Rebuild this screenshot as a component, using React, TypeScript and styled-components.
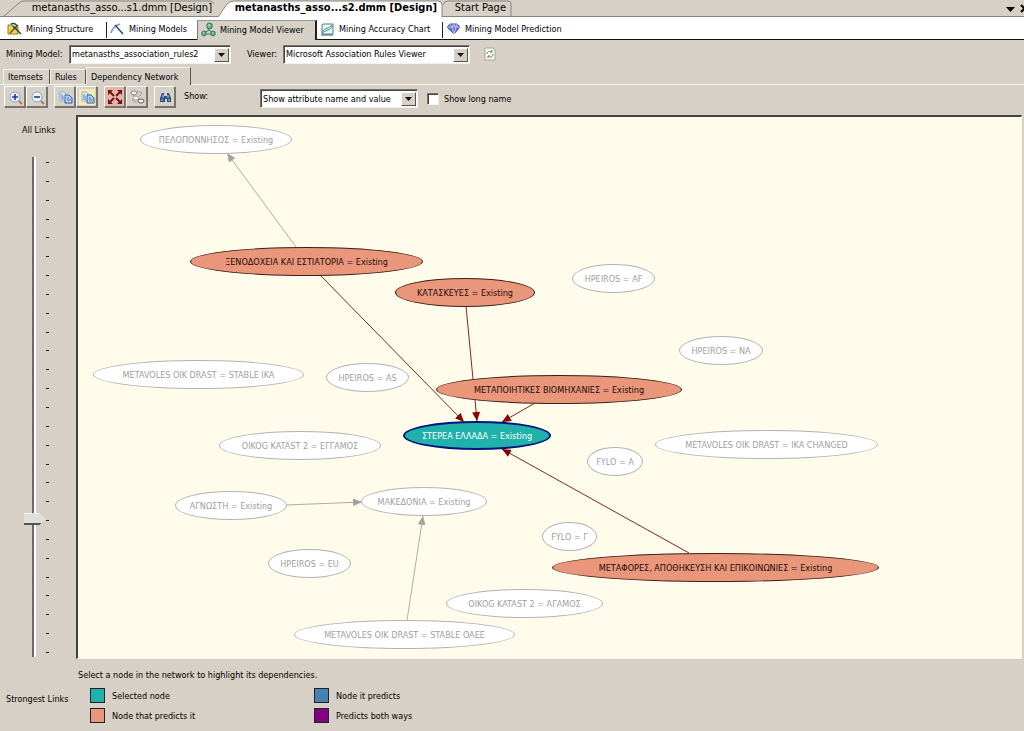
import React, { useState } from "react";
import styled, { createGlobalStyle, css } from "styled-components";

const FACE = "#d6d0c6";

const GlobalStyle = createGlobalStyle`
  * { box-sizing: border-box; }
  html, body, #root { height: 100%; }
  body {
    margin: 0;
    background: ${FACE};
    color: #000;
    font: 9px/14px "DejaVu Sans Condensed", "DejaVu Sans", sans-serif;
  }
  button, input, select { font: inherit; color: inherit; margin: 0; }
`;

const Shell = styled.div`
  height: 100%;
  min-height: 600px;
  display: flex;
  flex-direction: column;
  overflow: hidden;
`;

/* Document tabs */
const DocumentTabs = styled.nav`
  display: flex;
  flex: none;
  align-items: flex-end;
  height: 17px;
  border-bottom: 1px solid #87857f;
  padding-left: 4px;
`;

const DocumentTab = styled.button<{ $active?: boolean; $width: number }>`
  position: relative;
  flex: none;
  width: ${(p) => p.$width}px;
  height: 16px;
  padding: 0 6px 0 0;
  border: 0;
  background: none;
  font-size: 11px;
  line-height: 16px;
  font-weight: ${(p) => (p.$active ? "bold" : "normal")};
  text-align: right;
  white-space: nowrap;
  z-index: ${(p) => (p.$active ? 1 : 0)};
`;

const TabShape = styled.svg`
  position: absolute;
  left: 0;
  top: 0;
  z-index: -1;
`;

const DocumentActions = styled.div`
  margin-left: auto;
  display: flex;
  height: 16px;
  overflow: hidden;
`;

const FlatButton = styled.button<{ $gap?: number }>`
  display: grid;
  place-items: center;
  flex: none;
  border: 0;
  padding: 0;
  background: none;
  && { margin-left: ${(p) => p.$gap || 0}px; }
`;

/* Designer view tabs */
const ViewTabs = styled.nav`
  display: flex;
  flex: none;
  height: 23px;
  padding-left: 4px;
  background: #fff;
  border-bottom: 1px solid #111;
`;

const ViewTab = styled.button<{ $active?: boolean; $width: number; $rule?: boolean }>`
  display: flex;
  align-items: center;
  gap: 4px;
  flex: none;
  width: ${(p) => p.$width}px;
  height: 22px;
  padding: 2px 0 0 2px;
  border: 0;
  background: none;
  white-space: nowrap;
  position: relative;
  ${(p) =>
    p.$rule &&
    css`
      &::after {
        content: "";
        position: absolute;
        right: 0;
        top: 5px;
        bottom: 1px;
        width: 1px;
        background: #222;
      }
    `}
  ${(p) =>
    p.$active &&
    css`
      height: 20px;
      margin-top: 3px;
      padding: 0 0 2px 2px;
      height: 20px;
      background: ${FACE};
      border: solid;
      border-width: 1px 2px 0 1px;
      border-color: #999 #222 #999 #777;
      && { margin-top: 3px; }
    `}
`;

/* Rows of controls */
const ModelRow = styled.div`
  display: flex;
  flex: none;
  align-items: center;
  height: 28px;
  padding: 0 6px;
`;

const Caption = styled.label<{ $width?: number; $indent?: number }>`
  flex: none;
  width: ${(p) => (p.$width ? `${p.$width}px` : "auto")};
  padding-left: ${(p) => p.$indent || 0}px;
  white-space: nowrap;
`;

const Combo = styled.span<{ $width: number }>`
  position: relative;
  flex: none;
  display: flex;
  width: ${(p) => p.$width}px;
  height: 19px;
  background: #fff;
  border: 1px solid;
  border-color: #77746e #f4f2ee #f4f2ee #77746e;
  box-shadow: inset 1px 1px 0 #45433f;
`;

const ComboSelect = styled.select`
  appearance: none;
  width: 100%;
  padding: 0 18px 0 2px;
  border: 0;
  outline: 0;
  background: none;
`;

const ComboArrow = styled.span`
  position: absolute;
  right: 1px;
  top: 2px;
  bottom: 1px;
  width: 15px;
  display: grid;
  place-items: center;
  background: ${FACE};
  border: 1px solid;
  border-color: #fff #55534e #55534e #fff;
  pointer-events: none;
`;

const PaneTabs = styled.nav`
  display: flex;
  flex: none;
  align-items: flex-end;
  height: 17px;
  padding-left: 3px;
  box-shadow: inset 0 -1px 0 #f3f0ea;
`;

const PaneTab = styled.button<{ $active?: boolean; $width: number }>`
  flex: none;
  width: ${(p) => p.$width}px;
  height: ${(p) => (p.$active ? 18 : 15)}px;
  padding: 0 0 0 4px;
  text-align: left;
  white-space: nowrap;
  background: ${FACE};
  border: solid;
  border-width: 1px 1px 0 1px;
  border-color: #f3f0ea #55534e #f3f0ea #f3f0ea;
  && { margin-bottom: ${(p) => (p.$active ? 0 : 1)}px; }
`;

const Toolbar = styled.div`
  display: flex;
  flex: none;
  align-items: flex-start;
  height: 30px;
  padding: 1px 4px 0;
`;

const ToolGroup = styled.div<{ $gap: number }>`
  display: flex;
  flex: none;
  gap: 1px;
  margin-right: ${(p) => p.$gap}px;
`;

const ToolButton = styled.button<{ $tint?: string }>`
  display: grid;
  place-items: center;
  width: 21px;
  height: 21px;
  padding: 0;
  background: ${(p) => p.$tint || FACE};
  border: 1px solid;
  border-color: #fff #77746e #77746e #fff;
  box-shadow: 1px 1px 0 #77746e;
`;

const ShowLabel = styled.label`
  width: 76px;
  padding-top: 3px;
`;

const ShowControls = styled.div`
  display: flex;
  align-items: center;
  padding-top: 3px;
`;

const CheckBox = styled.input`
  appearance: none;
  flex: none;
  width: 12px;
  height: 12px;
  background: #fff;
  border: 1px solid;
  border-color: #77746e #f4f2ee #f4f2ee #77746e;
  box-shadow: inset 1px 1px 0 #45433f;
  && { margin: 0 5px 0 9px; }
  &:checked { background: #333; }
`;

/* Main area */
const Work = styled.main`
  flex: 1;
  min-height: 0;
  display: grid;
  grid-template-columns: 76px minmax(0, 1fr);
  grid-template-rows: minmax(0, 1fr);
`;

const LinkPanel = styled.section`
  display: flex;
  flex-direction: column;
  min-height: 0;
  padding: 8px 0 25px;
`;

const EndLabel = styled.span<{ $left: number }>`
  padding-left: ${(p) => p.$left}px;
  white-space: nowrap;
`;

const SliderArea = styled.div`
  flex: 1;
  min-height: 0;
  display: flex;
  padding: 20px 0 35px 24px;
`;

const Slider = styled.input`
  appearance: none;
  writing-mode: vertical-lr;
  width: 22px;
  height: auto;
  min-height: 0;
  background: linear-gradient(90deg, transparent 8px, #6c6a66 8px, #6c6a66 10px, #fff 10px, #fff 12px, transparent 12px);
  outline: 0;
  &::-webkit-slider-thumb {
    appearance: none;
    width: 22px;
    height: 12px;
    border: 0;
    background: linear-gradient(#fff 1px, #e2dfd8 1px, #e2dfd8 10px, #55534e 10px);
    clip-path: polygon(0 0, 15px 0, 22px 6px, 15px 12px, 0 12px);
  }
`;

const Ticks = styled.div`
  display: flex;
  flex-direction: column;
  justify-content: space-between;
  padding: 5px 0 4px;
`;

const Tick = styled.i`
  width: 3px;
  height: 1px;
  background: #222;
`;

const NetworkPanel = styled.section`
  display: flex;
  flex-direction: column;
  min-height: 0;
`;

const Canvas = styled.div`
  position: relative;
  flex: 1;
  min-height: 0;
  margin-right: 2px;
  background: #fffceb;
  border: solid;
  border-width: 2px 1px 1px 2px;
  border-color: #45433f #f8f6f0 #f8f6f0 #45433f;
  overflow: hidden;
`;

const Edges = styled.svg`
  position: absolute;
  left: 0;
  top: 0;
`;

type Kind = "idle" | "source" | "selected";

const nodeLook = {
  idle: css`background: #fff; color: #a0a0a0; border: 1px solid #b4b2b4;`,
  source: css`background: #e9967a; color: #1c0d0a; border: 1px solid #3c211a;`,
  selected: css`background: #20b2aa; color: #fff; border: 2px solid #00157c;`,
};

const Node = styled.button<{ $kind: Kind; $x: number; $y: number; $w: number }>`
  position: absolute;
  left: ${(p) => p.$x - 78}px;
  top: ${(p) => p.$y - 14 - 117}px;
  width: ${(p) => p.$w}px;
  height: 29px;
  padding: 0;
  border-radius: 50%;
  white-space: nowrap;
  display: flex;
  align-items: center;
  justify-content: center;
  ${(p) => nodeLook[p.$kind]}
`;

const Footer = styled.footer`
  flex: none;
  height: 72px;
  padding: 9px 0 0 2px;
`;

const Legend = styled.ul`
  list-style: none;
  margin: 6px 0 0 12px;
  padding: 0;
  display: grid;
  grid-template-columns: 224px 224px;
  row-gap: 5px;
`;

const LegendItem = styled.li`
  display: flex;
  align-items: center;
  gap: 7px;
  height: 15px;
`;

const Swatch = styled.i<{ $color: string }>`
  width: 15px;
  height: 15px;
  background: ${(p) => p.$color};
  border: 1px solid #222;
`;

/* Icons */
const IconSvg = styled.svg`
  flex: none;
  display: block;
`;

const Ico = ({ children, size = 16 }: { children: React.ReactNode; size?: number }) => (
  <IconSvg width={size} height={size} viewBox="0 0 16 16" fill="none" aria-hidden="true">{children}</IconSvg>
);

const StructureIcon = () => (
  <Ico>
    <path d="M2 4h4l1 2h5v7H2z" fill="#efd348" stroke="#967b19" />
    <path d="m4 12 8-8" stroke="#5b5632" strokeWidth="1.6" />
    <path d="m7 5 8 8M5 3c3-1 5 0 6 2" stroke="#28394c" strokeWidth="1.4" />
  </Ico>
);
const ModelsIcon = () => (
  <Ico>
    <path d="M2 12C3 8 5 5 11 3" stroke="#7f9cc4" strokeWidth="1.6" />
    <path d="m6 4 8 9" stroke="#33486b" strokeWidth="1.5" />
  </Ico>
);
const ViewerIcon = () => (
  <Ico>
    <path d="M9 6v3M9 8l-5 3M9 8l5 4M4 12h9" stroke="#397b75" />
    <path d="m9 1 3 1v4l-3 1-2-1V2zM4 9l2 1v3l-2 1-2-1v-3zM13 9l2 1v3l-2 1-2-1v-3z" fill="#64b984" stroke="#2c765d" />
    <path d="M8 3h2M3 11h1M12 11h1" stroke="#c9f1d3" />
  </Ico>
);
const ChartIcon = () => (
  <Ico>
    <path d="M4 3h10v10H3V4z" fill="#edf8f8" stroke="#527a85" />
    <path d="M3 12C5 6 8 9 13 4 13 9 9 8 3 12z" fill="#d8eff0" stroke="#458b98" />
    <path d="M2 14h12" stroke="#345765" />
  </Ico>
);
const GemIcon = () => (
  <Ico>
    <path d="M5 3h7l3 3-6 7-7-7z" fill="#6974cc" stroke="#4850a2" />
    <path d="m5 3 2 3 2 7 2-7 1-3M2 6h13M7 6l2-3 2 3" stroke="#b8c0f2" />
  </Ico>
);
const RefreshIcon = () => (
  <Ico>
    <path d="M3 2h8l2 2v10H3z" fill="#f8f9ee" stroke="#a3a9a8" />
    <path d="M5 8c0-3 3-3 5-2V4m0 2H8M11 8c0 3-3 4-5 2v2m0-2h2" stroke="#688a68" />
  </Ico>
);
const ZoomIcon = ({ plus }: { plus?: boolean }) => (
  <Ico>
    <circle cx="8" cy="8" r="5" fill="#e9f4fd" stroke="#8ba4c6" />
    <path d={plus ? "M5 8h6M8 5v6" : "M5 8h6"} stroke="#243c83" strokeWidth="1.6" />
    <path d="m12 12 3 3" stroke="#b47951" strokeWidth="2" />
  </Ico>
);
const CopyIcon = ({ all }: { all?: boolean }) => (
  <Ico>
    {all && <path d="M0 0h16v16H0z" fill="#f5ecad" />}
    <path d="M3 3h4l2 2v7H3z" fill="#e8f2ff" stroke="#86a9d6" />
    <path d="M8 6h4l3 3v5H8z" fill="#b4d0fa" stroke="#315f9d" />
    <path d="M4 6h2M4 8h3M4 10h3M10 9h2M10 11h4" stroke="#4779b7" />
  </Ico>
);
const FitIcon = () => (
  <Ico>
    <path d="m3 3 4 4M13 3 9 7M3 13l4-4M13 13 9 9" stroke="#711411" strokeWidth="2" />
    <path d="M1 1h5L1 6zM15 1v5l-5-5zM1 15v-5l5 5zM15 15h-5l5-5z" fill="#711411" />
  </Ico>
);
const LayoutIcon = () => (
  <Ico>
    <path d="m4 6 4 5M8 2l5 2-2 3M3 11l5 3" stroke="#777" strokeDasharray="1 1" />
    <ellipse cx="5" cy="4" rx="3" ry="2" fill="#eee" stroke="#888" />
    <ellipse cx="7" cy="9" rx="3" ry="2" fill="#fff" stroke="#999" />
    <ellipse cx="12" cy="12" rx="3" ry="2" fill="#fff" stroke="#555" />
  </Ico>
);
const FindIcon = () => (
  <Ico>
    <path d="M5 4h2v3h3V4h2l2 5v4h-4v-3H8v3H3V9z" fill="#304e82" />
    <path d="M6 6v3M11 6v3M5 10v2M12 10v2" stroke="#b6d3f5" />
  </Ico>
);
const Down = () => (
  <svg width="7" height="4" aria-hidden="true"><path d="M0 0h7L3.5 4z" fill="#111" /></svg>
);

const nodes: { label: string; x: number; y: number; w: number; kind?: Kind }[] = [
  { label: "ΠΕΛΟΠΟΝΝΗΣΟΣ = Existing", x: 140, y: 139, w: 152 },
  { label: "ΞΕΝΟΔΟΧΕΙΑ ΚΑΙ ΕΣΤΙΑΤΟΡΙΑ = Existing", x: 190, y: 261, w: 233, kind: "source" },
  { label: "ΚΑΤΑΣΚΕΥΕΣ = Existing", x: 395, y: 292, w: 140, kind: "source" },
  { label: "HPEIROS = AF", x: 572, y: 278, w: 83 },
  { label: "HPEIROS = NA", x: 679, y: 350, w: 84 },
  { label: "METAVOLES OIK DRAST = STABLE IKA", x: 93, y: 374, w: 211 },
  { label: "HPEIROS = AS", x: 326, y: 377, w: 83 },
  { label: "ΜΕΤΑΠΟΙΗΤΙΚΕΣ ΒΙΟΜΗΧΑΝΙΕΣ = Existing", x: 436, y: 389, w: 246, kind: "source" },
  { label: "OIKOG KATAST 2 = ΕΓΓΑΜΟΣ", x: 219, y: 445, w: 162 },
  { label: "ΣΤΕΡΕΑ ΕΛΛΑΔΑ = Existing", x: 403, y: 435, w: 148, kind: "selected" },
  { label: "METAVOLES OIK DRAST = IKA CHANGED", x: 655, y: 444, w: 223 },
  { label: "FYLO = A", x: 587, y: 461, w: 56 },
  { label: "ΑΓΝΩΣΤΗ = Existing", x: 175, y: 505, w: 112 },
  { label: "ΜΑΚΕΔΟΝΙΑ = Existing", x: 361, y: 501, w: 126 },
  { label: "HPEIROS = EU", x: 268, y: 563, w: 83 },
  { label: "FYLO = Γ", x: 542, y: 536, w: 55 },
  { label: "ΜΕΤΑΦΟΡΕΣ, ΑΠΟΘΗΚΕΥΣΗ ΚΑΙ ΕΠΙΚΟΙΝΩΝΙΕΣ = Existing", x: 552, y: 567, w: 327, kind: "source" },
  { label: "OIKOG KATAST 2 = ΑΓΑΜΟΣ", x: 446, y: 603, w: 157 },
  { label: "METAVOLES OIK DRAST = STABLE OAEE", x: 294, y: 634, w: 221 },
];

const edges: { from: [number, number]; to: [number, number]; active?: boolean }[] = [
  { from: [296, 247], to: [227, 153] },
  { from: [286, 505], to: [362, 502] },
  { from: [407, 620], to: [423, 516] },
  { from: [320, 275], to: [464, 422], active: true },
  { from: [466, 306], to: [477, 421], active: true },
  { from: [535, 403], to: [502, 422], active: true },
  { from: [689, 553], to: [502, 449], active: true },
];

const Network = () => (
  <Canvas>
    <Edges width="944" height="542" viewBox="78 117 944 542" aria-hidden="true">
      <defs>
        {[["rest", "#a5a3a0"], ["lit", "#8b0000"]].map(([id, fill]) => (
          <marker key={id} id={id} markerUnits="userSpaceOnUse" markerWidth="10" markerHeight="10" refX="9" refY="4" orient="auto">
            <path d="M0 0 9 4 0 8z" fill={fill} />
          </marker>
        ))}
      </defs>
      {edges.map((e, i) => (
        <line
          key={i}
          x1={e.from[0]} y1={e.from[1]} x2={e.to[0]} y2={e.to[1]}
          stroke={e.active ? "#81291f" : "#b0ada4"}
          markerEnd={e.active ? "url(#lit)" : "url(#rest)"}
        />
      ))}
    </Edges>
    {nodes.map((n) => (
      <Node key={n.label} $kind={n.kind || "idle"} $x={n.x} $y={n.y} $w={n.w}>{n.label}</Node>
    ))}
  </Canvas>
);

const ComboBox = ({ id, width, value }: { id: string; width: number; value: string }) => (
  <Combo $width={width}>
    <ComboSelect id={id}><option>{value}</option></ComboSelect>
    <ComboArrow><Down /></ComboArrow>
  </Combo>
);

export default function App() {
  const [strength, setStrength] = useState(73);
  const [longName, setLongName] = useState(false);
  return (
    <>
      <GlobalStyle />
      <Shell>
        <DocumentTabs>
          <DocumentTab $width={214}>
            <TabShape width="214" height="17"><path d="M0 16 15 3Q17 1 20 1H205Q209 1 210 4" fill="none" stroke="#87857f" /></TabShape>
            metanasths_asso...s1.dmm [Design]
          </DocumentTab>
          <DocumentTab $active $width={225}>
            <TabShape width="225" height="17"><path d="M0 17 9 4Q12 1 16 1H220Q224 1 224 5V17" fill="#fff" stroke="#87857f" /></TabShape>
            metanasths_asso...s2.dmm [Design]
          </DocumentTab>
          <DocumentTab $width={69}>
            <TabShape width="69" height="17"><path d="M0 5Q1 1 5 1H65Q68 1 68 4V16" fill="none" stroke="#87857f" /></TabShape>
            Start Page
          </DocumentTab>
          <DocumentActions>
            <FlatButton aria-label="Window list"><svg width="17" height="16"><path d="M3 7h9L7.5 12z" fill="#000" /></svg></FlatButton>
            <FlatButton aria-label="Close"><svg width="4" height="16"><path d="m1 5 7 7M1 12l7-7" stroke="#000" strokeWidth="2" /></svg></FlatButton>
          </DocumentActions>
        </DocumentTabs>
        <ViewTabs>
          <ViewTab $width={103} $rule><StructureIcon />Mining Structure</ViewTab>
          <ViewTab $width={90}><ModelsIcon />Mining Models</ViewTab>
          <ViewTab $width={120} $active><ViewerIcon />Mining Model Viewer</ViewTab>
          <ViewTab $width={126} $rule><ChartIcon />Mining Accuracy Chart</ViewTab>
          <ViewTab $width={126}><GemIcon />Mining Model Prediction</ViewTab>
        </ViewTabs>
        <ModelRow>
          <Caption htmlFor="model" $width={63}>Mining Model:</Caption>
          <ComboBox id="model" width={162} value="metanasths_association_rules2" />
          <Caption htmlFor="viewer" $width={52} $indent={16}>Viewer:</Caption>
          <ComboBox id="viewer" width={187} value="Microsoft Association Rules Viewer" />
          <FlatButton aria-label="Refresh" $gap={12}><RefreshIcon /></FlatButton>
        </ModelRow>
        <PaneTabs>
          <PaneTab $width={47}>Itemsets</PaneTab>
          <PaneTab $width={36}>Rules</PaneTab>
          <PaneTab $active $width={105}>Dependency Network</PaneTab>
        </PaneTabs>
        <Toolbar>
          <ToolGroup $gap={7}>
            <ToolButton aria-label="Zoom in"><ZoomIcon plus /></ToolButton>
            <ToolButton aria-label="Zoom out"><ZoomIcon /></ToolButton>
          </ToolGroup>
          <ToolGroup $gap={7}>
            <ToolButton aria-label="Copy view"><CopyIcon /></ToolButton>
            <ToolButton aria-label="Copy entire graph"><CopyIcon all /></ToolButton>
          </ToolGroup>
          <ToolGroup $gap={7}>
            <ToolButton aria-label="Fit to window" $tint="#e5b5ad"><FitIcon /></ToolButton>
            <ToolButton aria-label="Improve layout"><LayoutIcon /></ToolButton>
          </ToolGroup>
          <ToolGroup $gap={9}>
            <ToolButton aria-label="Find node"><FindIcon /></ToolButton>
          </ToolGroup>
          <ShowLabel htmlFor="show">Show:</ShowLabel>
          <ShowControls>
            <ComboBox id="show" width={158} value="Show attribute name and value" />
            <CheckBox type="checkbox" id="long" checked={longName} onChange={(e) => setLongName(e.target.checked)} />
            <Caption htmlFor="long">Show long name</Caption>
          </ShowControls>
        </Toolbar>
        <Work>
          <LinkPanel>
            <EndLabel $left={22}>All Links</EndLabel>
            <SliderArea>
              <Slider type="range" min={0} max={100} value={strength} aria-label="Link strength" onChange={(e) => setStrength(Number(e.target.value))} />
              <Ticks>{Array.from({ length: 27 }, (_, i) => <Tick key={i} />)}</Ticks>
            </SliderArea>
            <EndLabel $left={6}>Strongest Links</EndLabel>
          </LinkPanel>
          <NetworkPanel>
            <Network />
            <Footer>
              Select a node in the network to highlight its dependencies.
              <Legend>
                <LegendItem><Swatch $color="#20b2aa" />Selected node</LegendItem>
                <LegendItem><Swatch $color="#4682b4" />Node it predicts</LegendItem>
                <LegendItem><Swatch $color="#e9967a" />Node that predicts it</LegendItem>
                <LegendItem><Swatch $color="#800080" />Predicts both ways</LegendItem>
              </Legend>
            </Footer>
          </NetworkPanel>
        </Work>
      </Shell>
    </>
  );
}
